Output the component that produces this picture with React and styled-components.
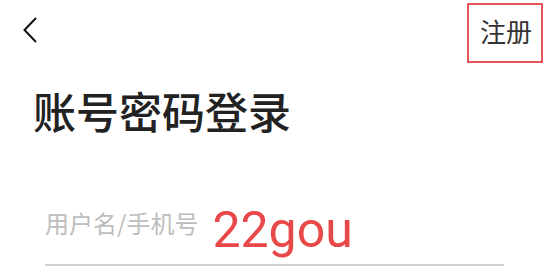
import React from "react";
import styled, { createGlobalStyle } from "styled-components";

const GlobalStyle = createGlobalStyle`
  html, body {
    margin: 0;
    padding: 0;
    background: #ffffff;
  }
  body {
    font-family: "Noto Sans CJK SC", "Noto Sans", sans-serif;
  }
`;

const Page = styled.div`
  width: 550px;
  height: 275px;
  overflow: hidden;
  background: #fff;
`;

const Header = styled.div`
  display: flex;
  justify-content: space-between;
  align-items: flex-start;
  padding: 3px 7px 0 23px;
`;

const BackButton = styled.button`
  display: flex;
  margin-top: 14px;
  padding: 0;
  border: none;
  background: none;
  color: #111;
`;

const RegisterButton = styled.button`
  display: flex;
  align-items: center;
  justify-content: center;
  box-sizing: border-box;
  width: 76px;
  height: 60px;
  padding: 0 0 6px 2px;
  border: 2px solid #e5565b;
  background: #fff;
  color: #333;
  font-family: "Noto Sans CJK SC", sans-serif;
  font-size: 26px;
`;

const Title = styled.h1`
  margin: 26px 0 0 33px;
  font-size: 43px;
  line-height: 43px;
  font-weight: 500;
  color: #222;
`;

const FieldRow = styled.div`
  display: flex;
  align-items: flex-start;
  height: 54px;
  margin: 61px 46px 0 45px;
  padding-bottom: 17px;
  border-bottom: 2px solid #d0d0d0;
`;

const Placeholder = styled.span`
  margin-top: 18px;
  font-size: 24px;
  line-height: 24px;
  color: #bdbdbd;
`;

const Value = styled.span`
  margin: 12px 0 0 14px;
  font-family: Roboto, "Noto Sans", sans-serif;
  font-size: 50px;
  line-height: 50px;
  color: #e84848;
`;

function BackIcon() {
  return (
    <svg width="14" height="26" viewBox="0 0 14 26" fill="none">
      <path d="M13 1 L1.5 13 L13 25" stroke="currentColor" strokeWidth="2" />
    </svg>
  );
}

export default function App() {
  return (
    <Page>
      <GlobalStyle />
      <Header>
        <BackButton>
          <BackIcon />
        </BackButton>
        <RegisterButton>注册</RegisterButton>
      </Header>
      <Title>账号密码登录</Title>
      <FieldRow>
        <Placeholder>用户名/手机号</Placeholder>
        <Value>22gou</Value>
      </FieldRow>
    </Page>
  );
}
